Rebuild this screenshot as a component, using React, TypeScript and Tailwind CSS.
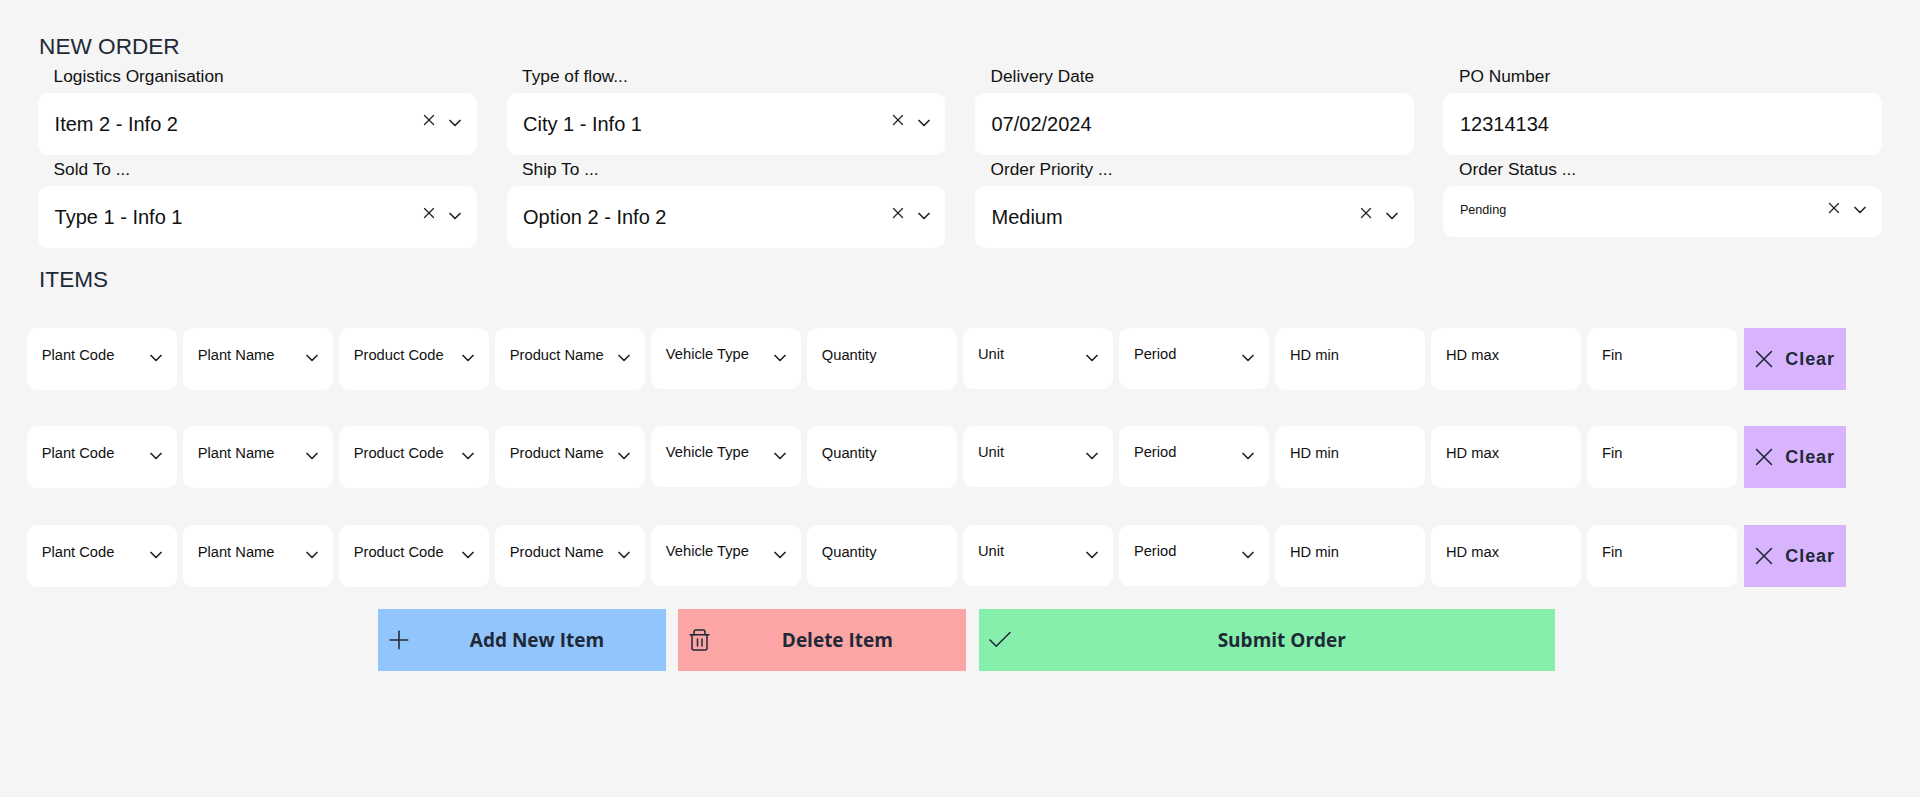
import React from 'react';
import { Check, ChevronDown, Plus, X } from 'lucide-react';

const font = "font-['Liberation_Sans',Arial,sans-serif]";

const TopField = ({ label, value, clear, small }: { label: string; value: string; clear?: boolean; small?: boolean }) => (
    <div className="flex flex-col">
        <label className="h-[31px] pl-[15.5px] pt-[3px] text-[17.3px] leading-[22px] text-[#111]">{label}</label>
        <div className={`flex justify-between rounded-[10px] bg-white pl-[16.5px] pr-[11.5px] ${small ? 'h-[51px]' : 'h-[62px]'}`}>
            <span className={`flex items-center text-[#111] ${small ? 'pb-[2px] text-[12.6px]' : 'text-xl'}`}>{value}</span>
            {clear && (
                <div className="flex h-full items-center gap-[7px] pb-[3px]">
                    <X size={18} strokeWidth={1.6} className="mb-[5px] text-[#222]" />
                    <ChevronDown size={20} strokeWidth={2} className="text-[#222]" />
                </div>
            )}
        </div>
    </div>
);

const Cell = ({ label, select, short }: { label: string; select?: boolean; short?: boolean }) => (
    <div className={`flex w-[149.65px] items-start justify-between rounded-[10px] bg-white pl-[14.7px] pr-[11px] ${short ? 'h-[61px]' : 'h-[62px]'}`}>
        <span className={`text-[14.7px] leading-[20px] text-[#111] ${short ? 'mt-[16px]' : 'mt-[17px]'}`}>{label}</span>
        {select && <ChevronDown size={20} strokeWidth={2} className="mt-[20px] text-[#222]" />}
    </div>
);

const ItemRow = () => (
    <div className="flex h-[62px] items-start gap-[6.4px]">
        <Cell label="Plant Code" select />
        <Cell label="Plant Name" select />
        <Cell label="Product Code" select />
        <Cell label="Product Name" select />
        <Cell label="Vehicle Type" select short />
        <Cell label="Quantity" />
        <Cell label="Unit" select short />
        <Cell label="Period" select short />
        <Cell label="HD min" />
        <Cell label="HD max" />
        <Cell label="Fin" />
        <button className="ml-[0.5px] flex h-[62px] w-[102px] items-center gap-[6px] bg-[#d8b4fe] pl-[5.5px] text-lg font-bold tracking-[0.9px] text-[#1f2937]">
            <X size={30} strokeWidth={1.25} />
            Clear
        </button>
    </div>
);

const TrashIcon = () => (
    <svg width="30" height="30" viewBox="0 0 30 30" fill="none" stroke="currentColor" strokeWidth="1.5" strokeLinecap="round" strokeLinejoin="round">
        <path d="M6 9.7h19" />
        <path d="M10 9.7V7a2 2 0 0 1 2-2h7a2 2 0 0 1 2 2v2.7" />
        <path d="M8 9.7V23a2 2 0 0 0 2 2h11a2 2 0 0 0 2-2V9.7" />
        <path d="M13.5 14v7M18 14v7" />
    </svg>
);

const ActionButton = ({ label, color, width, icon }: { label: string; color: string; width: string; icon: React.ReactNode }) => (
    <button className={`flex h-[62px] items-center px-[6px] font-['Open_Sans',sans-serif] text-[19px] font-bold text-[#1f2937] ${color} ${width}`}>
        {icon}
        <span className="flex-1 text-center">{label}</span>
    </button>
);

export default function App() {
    return (
        <div className={`h-[797px] bg-[#f5f5f5] ${font}`}>
            <div className="pl-[38.1px] pr-[38.05px] pt-[31px]">
                <h2 className="h-[31px] pl-[1px] text-[22.6px] leading-[32px] text-[#1f2937]">NEW ORDER</h2>
                <div className="grid grid-cols-4 gap-x-[29.95px]">
                    <TopField label="Logistics Organisation" value="Item 2 - Info 2" clear />
                    <TopField label="Type of flow..." value="City 1 - Info 1" clear />
                    <TopField label="Delivery Date" value="07/02/2024" />
                    <TopField label="PO Number" value="12314134" />
                    <TopField label="Sold To ..." value="Type 1 - Info 1" clear />
                    <TopField label="Ship To ..." value="Option 2 - Info 2" clear />
                    <TopField label="Order Priority ..." value="Medium" clear />
                    <TopField label="Order Status ..." value="Pending" clear small />
                </div>
                <h2 className="mt-[16px] h-[32px] pl-[1px] text-[22.6px] leading-[32px] text-[#1f2937]">ITEMS</h2>
            </div>
            <div className="mt-[32px] flex flex-col gap-[36.4px] pl-[27px]">
                <ItemRow />
                <ItemRow />
                <ItemRow />
            </div>
            <div className="ml-[378px] mt-[22px] flex gap-[12.4px]">
                <ActionButton label="Add New Item" color="bg-[#93c5fd]" width="w-[288px]" icon={<Plus size={30} strokeWidth={1.25} />} />
                <ActionButton label="Delete Item" color="bg-[#fca5a5]" width="w-[288px]" icon={<TrashIcon />} />
                <ActionButton label="Submit Order" color="bg-[#86efac]" width="w-[576px]" icon={<Check size={30} strokeWidth={1.25} />} />
            </div>
        </div>
    );
}
